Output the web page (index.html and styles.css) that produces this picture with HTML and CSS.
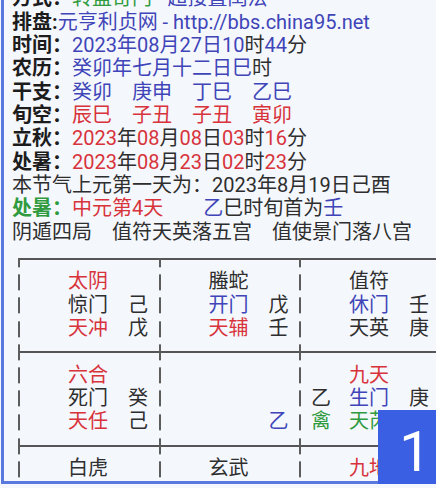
FILE: index.html
```html
<!DOCTYPE html>
<html lang="zh">
<head>
<meta charset="utf-8">
<title>奇门排盘</title>
<link rel="stylesheet" href="styles.css">
</head>
<body>
<div class="page">
  <div class="info">
    <p class="ln"><b>方式：</b><span class="g">转盘奇门</span><span class="u"> - 超接置闰法</span></p>
    <p class="ln"><b>排盘:</b><span class="u">元亨利贞网 - http://bbs.china95.net</span></p>
    <p class="ln"><b>时间：</b><span class="u">2023年08月27日10</span>时<span class="u">44</span>分</p>
    <p class="ln"><b>农历：</b><span class="u">癸卯年七月十二日巳</span>时</p>
    <p class="ln"><b>干支：</b><span class="u">癸卯　庚申　丁巳　乙巳</span></p>
    <p class="ln"><b>旬空：</b><span class="r">辰巳　子丑　子丑　寅卯</span></p>
    <p class="ln"><b>立秋：</b><span class="r">2023</span>年<span class="r">08</span>月<span class="r">08</span>日<span class="r">03</span>时<span class="r">16</span>分</p>
    <p class="ln"><b>处暑：</b><span class="r">2023</span>年<span class="r">08</span>月<span class="r">23</span>日<span class="r">02</span>时<span class="r">23</span>分</p>
    <p class="ln">本节气上元第一天为：2023年8月19日己酉</p>
    <p class="ln"><b class="g">处暑：</b><span class="r">中元第4天</span>　　<span class="u">乙</span>巳时旬首为<span class="u">壬</span></p>
    <p class="ln">阴遁四局　值符天英落五宫　值使景门落八宫</p>
  </div>

  <div class="board">
    <div class="cell">
      <span class="c2 r">太阴</span>
      <span class="c2">惊门</span><span class="c3">己</span>
      <span class="c2 r">天冲</span><span class="c3">戊</span>
    </div>
    <div class="cell">
      <span class="c2">螣蛇</span>
      <span class="c2 u">开门</span><span class="c3">戊</span>
      <span class="c2 r">天辅</span><span class="c3">壬</span>
    </div>
    <div class="cell">
      <span class="c2">值符</span>
      <span class="c2 u">休门</span><span class="c3">壬</span>
      <span class="c2">天英</span><span class="c3">庚</span>
    </div>

    <div class="cell">
      <span class="c2 r">六合</span>
      <span class="c2">死门</span><span class="c3">癸</span>
      <span class="c2 r">天任</span><span class="c3">己</span>
    </div>
    <div class="cell">
      <span class="c2"></span>
      <span class="c2"></span>
      <span class="c3 row3 u">乙</span>
    </div>
    <div class="cell">
      <span class="c2 r">九天</span>
      <span class="c1">乙</span><span class="c2 u">生门</span><span class="c3">庚</span>
      <span class="c1 g">禽</span><span class="c2 g">天芮</span>
    </div>

    <div class="cell">
      <span class="c2">白虎</span>
    </div>
    <div class="cell">
      <span class="c2">玄武</span>
    </div>
    <div class="cell">
      <span class="c2 r">九地</span>
    </div>
  </div>
</div>
<div class="badge">1</div>
</body>
</html>
```
FILE: styles.css
```css
html, body {
  margin: 0;
  padding: 0;
  background: #f4f7fc;
  width: 436px;
  height: 488px;
  overflow: hidden;
}

body {
  font-family: Roboto, "Noto Sans CJK SC", sans-serif;
  font-size: 20px;
  line-height: 23.33px;
  color: #2e2e2e;
}

.page {
  margin-top: -12.7px;
  margin-left: 1px;
  padding-left: 8px;
  height: 493.7px;
  border-left: 3px solid #5a79de;
  border-bottom: 3px solid #5a79de;
  overflow: hidden;
}

.info .ln {
  margin: 0;
  white-space: nowrap;
  height: 23.33px;
}

.info b {
  font-weight: 700;
  color: #1c1c1c;
}

.u { color: #3f45b8; }
.r { color: #d8333b; }
.g { color: #2f9b3e; }
b.g { color: #2f9b3e; }

.board {
  display: grid;
  grid-template-columns: repeat(3, 140.5px);
  margin-left: 7px;
  margin-top: 14.1px;
}

.cell {
  position: relative;
  box-sizing: border-box;
  height: 93.33px;
  border-top: 2px solid #555;
  padding: 10.3px 0 0 11px;
  display: grid;
  grid-template-columns: 38px 60px 20px;
  grid-auto-rows: 23.33px;
  align-content: start;
  white-space: nowrap;
}

.cell::before {
  content: "";
  position: absolute;
  left: -1px;
  top: -2px;
  width: 2px;
  height: 93.33px;
  background: repeating-linear-gradient(to bottom,
    transparent 0, transparent 3.67px,
    #5c5c5c 3.67px, #5c5c5c 19.67px,
    transparent 19.67px, transparent 23.33px);
  background-position: 0 -10.67px;
}

.c1 { grid-column: 1; }
.c2 { grid-column: 2; }
.c3 { grid-column: 3; }
.row3 { grid-row: 3; }

.badge {
  position: fixed;
  left: 378px;
  top: 410px;
  width: 74px;
  height: 74px;
  box-sizing: border-box;
  padding-top: 12px;
  background: #3b5fe2;
  color: #ffffff;
  font-family: Roboto, sans-serif;
  font-size: 56px;
  font-weight: 400;
  display: flex;
  align-items: center;
  justify-content: center;
}
```
